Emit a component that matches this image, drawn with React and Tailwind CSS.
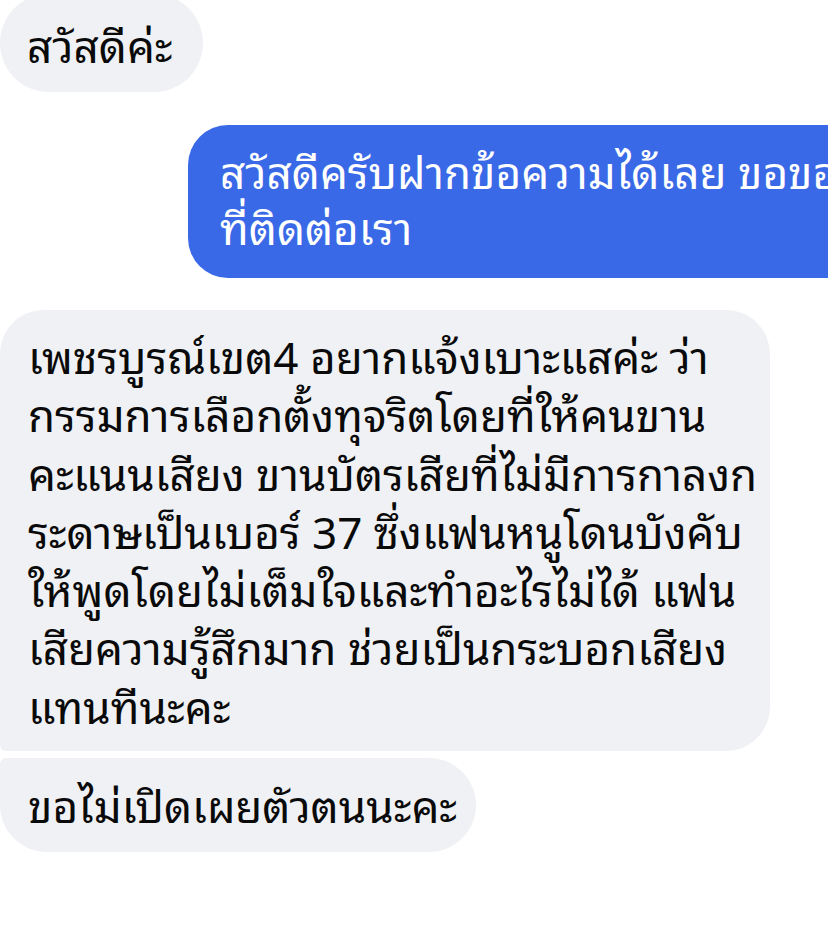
export default function App() {
  const lines = [
    "เพชรบูรณ์เขต4 อยากแจ้งเบาะแสค่ะ ว่า",
    "กรรมการเลือกตั้งทุจริตโดยที่ให้คนขาน",
    "คะแนนเสียง ขานบัตรเสียที่ไม่มีการกาลงก",
    "ระดาษเป็นเบอร์ 37 ซึ่งแฟนหนูโดนบังคับ",
    "ให้พูดโดยไม่เต็มใจและทำอะไรไม่ได้ แฟน",
    "เสียความรู้สึกมาก ช่วยเป็นกระบอกเสียง",
    "แทนทีนะคะ",
  ];
  return (
    <div className="w-[828px] h-[944px] bg-white overflow-hidden font-['Noto_Sans_Thai_Looped','Noto_Sans_Thai','Noto_Sans',sans-serif] text-[44px] text-[#0a0a0a]">
      <div className="mt-[-6px] w-[203px] h-[98px] rounded-[49px] bg-[#f0f1f4] flex items-center pl-[27px] whitespace-nowrap">
        สวัสดีค่ะ
      </div>
      <div className="mt-[33px] ml-[188px] w-[700px] h-[153px] rounded-[40px] bg-[#3a69e7] text-white pl-[32px] pt-[16px] leading-[56px] whitespace-nowrap">
        <div>สวัสดีครับฝากข้อความได้เลย ขอขอบคุณ</div>
        <div>ที่ติดต่อเรา</div>
      </div>
      <div className="mt-[32px] w-[770px] h-[441px] rounded-tl-[44px] rounded-tr-[44px] rounded-br-[44px] rounded-bl-[6px] bg-[#f0f1f4] pl-[28px] pt-[15px] leading-[58.3px] whitespace-nowrap">
        {lines.map((l, i) => (
          <div key={i}>{l}</div>
        ))}
      </div>
      <div className="mt-[7px] w-[476px] h-[94px] rounded-tl-[6px] rounded-tr-[47px] rounded-br-[47px] rounded-bl-[47px] bg-[#f0f1f4] flex items-center pl-[28px] pb-[4px] whitespace-nowrap">
        ขอไม่เปิดเผยตัวตนนะคะ
      </div>
    </div>
  );
}
